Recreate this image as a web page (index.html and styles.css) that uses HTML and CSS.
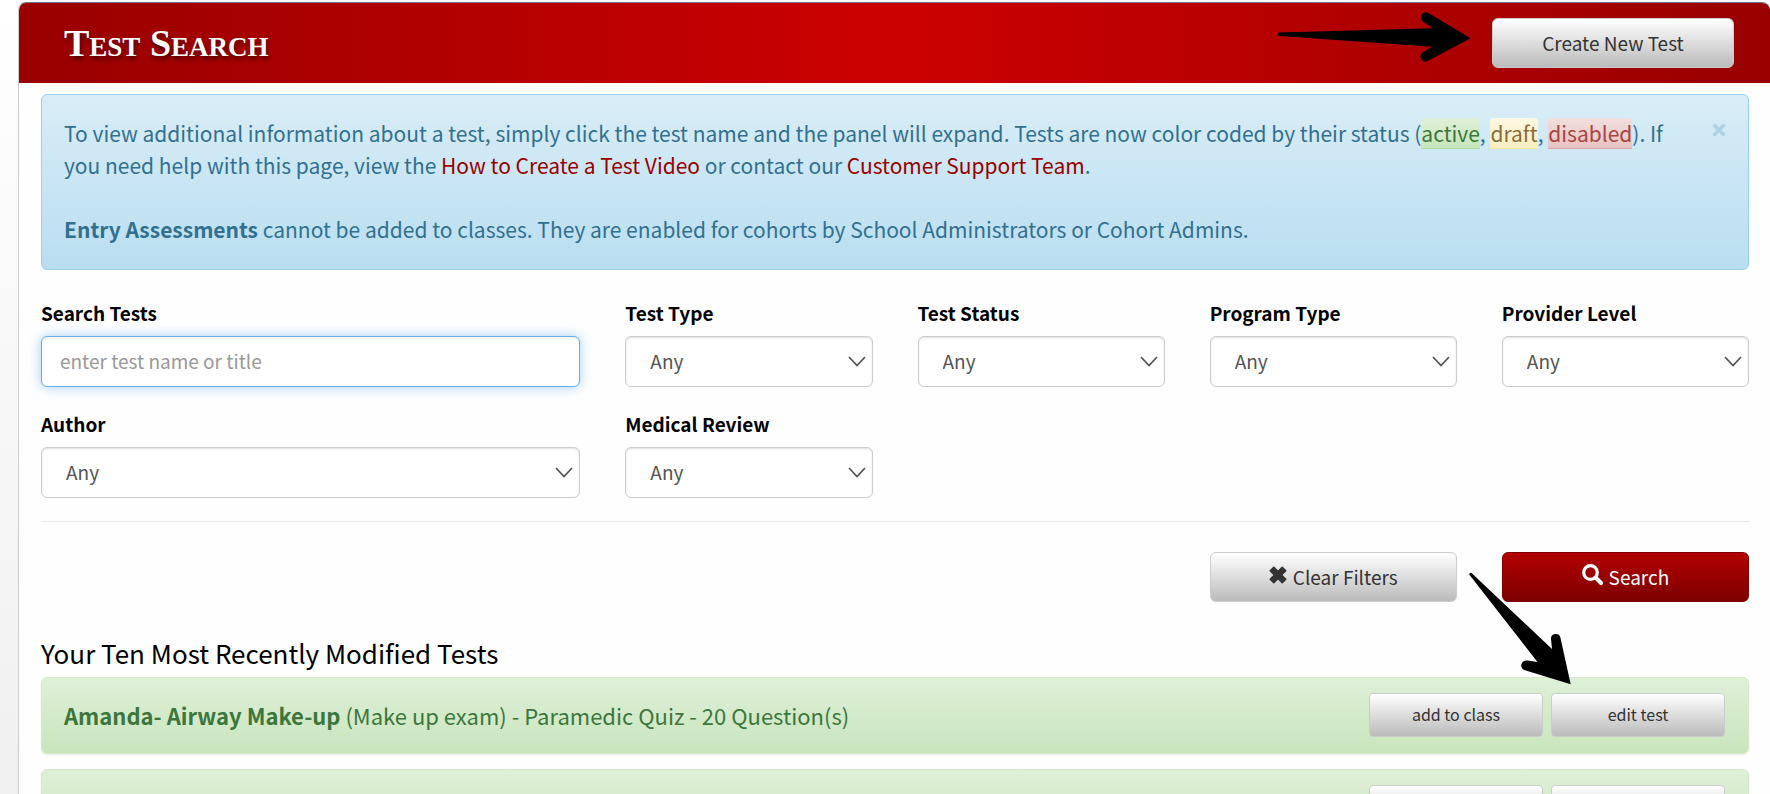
FILE: index.html
```html
<!DOCTYPE html>
<html lang="en">
<head>
<meta charset="utf-8">
<title>Test Search</title>
<link rel="stylesheet" href="styles.css">
</head>
<body>
<div class="page">
  <main class="panel">
    <header class="panel-header">
      <h1 class="panel-title">Test Search</h1>
      <button type="button" class="btn btn-default btn-create">Create New Test</button>
    </header>
    <div class="panel-body">
      <section class="alert">
        <div class="alert-text">
          <p class="alert-line">To view additional information about a test, simply click the test name and the panel will expand. Tests are now color coded by their status (<span class="tag tag-active">active</span>, <span class="tag tag-draft">draft</span>, <span class="tag tag-disabled">disabled</span>). If you need help with this page, view the <a class="link" href="#">How to Create a Test Video</a> or contact our <a class="link" href="#">Customer Support Team</a>.</p>
          <p class="alert-line"><strong>Entry Assessments</strong> cannot be added to classes. They are enabled for cohorts by School Administrators or Cohort Admins.</p>
        </div>
        <button type="button" class="alert-close" aria-label="Close">
          <svg width="14" height="14" viewBox="0 0 14 14"><path d="M1.500 1.500L12.500 12.500M12.500 1.500L1.500 12.500" stroke="currentColor" stroke-width="3.500"/></svg>
        </button>
      </section>

      <form class="filters">
        <div class="field field-wide">
          <label class="label" for="q">Search Tests</label>
          <input class="control control-active" id="q" type="text" placeholder="enter test name or title">
        </div>
        <div class="field">
          <label class="label" for="type">Test Type</label>
          <select class="control select" id="type"><option>Any</option></select>
        </div>
        <div class="field">
          <label class="label" for="status">Test Status</label>
          <select class="control select" id="status"><option>Any</option></select>
        </div>
        <div class="field">
          <label class="label" for="program">Program Type</label>
          <select class="control select" id="program"><option>Any</option></select>
        </div>
        <div class="field">
          <label class="label" for="level">Provider Level</label>
          <select class="control select" id="level"><option>Any</option></select>
        </div>
        <div class="field field-wide">
          <label class="label" for="author">Author</label>
          <select class="control select" id="author"><option>Any</option></select>
        </div>
        <div class="field">
          <label class="label" for="review">Medical Review</label>
          <select class="control select" id="review"><option>Any</option></select>
        </div>
        <hr class="rule">
        <button type="reset" class="btn btn-default btn-clear">
          <svg class="icon" width="18" height="18" viewBox="0 0 18 18"><path d="M4.800 1.300L9 5.500 13.200 1.300 16.700 4.800 12.500 9 16.700 13.200 13.200 16.700 9 12.500 4.800 16.700 1.300 13.200 5.500 9 1.300 4.800z" fill="currentColor" stroke="currentColor" stroke-width="1.600" stroke-linejoin="round"/></svg>
          <span>Clear Filters</span>
        </button>
        <button type="button" class="btn btn-primary">
          <svg class="icon" width="21" height="21" viewBox="0 0 21 21"><circle cx="8.500" cy="8.500" r="6.800" fill="none" stroke="currentColor" stroke-width="3.200"/><path d="M13.500 13.500L19 19" stroke="currentColor" stroke-width="4" stroke-linecap="round"/></svg>
          <span>Search</span>
        </button>
      </form>

      <h2 class="section-title">Your Ten Most Recently Modified Tests</h2>
      <article class="test">
        <p class="test-name"><strong>Amanda- Airway Make-up</strong> (Make up exam) - Paramedic Quiz - 20 Question(s)</p>
        <button type="button" class="btn btn-default btn-small">add to class</button>
        <button type="button" class="btn btn-default btn-small">edit test</button>
      </article>
      <article class="test">
        <p class="test-name"></p>
        <button type="button" class="btn btn-default btn-small" aria-label="add to class"></button>
        <button type="button" class="btn btn-default btn-small" aria-label="edit test"></button>
      </article>
    </div>
  </main>
  <svg class="arrow arrow-create" width="194" height="50" viewBox="0 0 194 50"><path d="M2.500 20.600L155.500 16.200 146 9.600A5 5 0 0 1 151.800 1.200L193.500 26.200 150.500 49A5 5 0 0 1 145.500 40.400L155 34.700 2.500 24A1.700 1.700 0 0 1 2.500 20.600z"/></svg>
  <svg class="arrow arrow-edit" width="103" height="113" viewBox="0 0 103 113"><path d="M2.800 1.200L83 77 82 67A4.800 4.800 0 0 1 91.400 65.500L101.700 112.300 56 98.300A4.800 4.800 0 0 1 58.500 88.600L68.500 90 .8 3.200A1.400 1.400 0 0 1 2.800 1.200z"/></svg>
</div>
</body>
</html>
```

FILE: styles.css
```css
* { box-sizing: border-box; }

body {
  margin: 0;
  font-family: "Noto Sans CJK SC", "Open Sans", sans-serif;
  font-size: 19px;
  color: #000;
}

.page {
  position: relative;
  height: 100vh;
  overflow: hidden;
  padding: 2px 0 0 18px;
  background: linear-gradient(#fff, #f0f0f0);
}

.panel {
  border: 1px solid #ccc;
  border-top-color: #778;
  border-right: 0;
  border-radius: 8px 8px 0 0;
  background: #fefefe;
  overflow: hidden;
}

.panel-header {
  display: flex;
  align-items: center;
  justify-content: space-between;
  height: 80px;
  padding: 0 36px 0 45px;
  background: linear-gradient(to right, #900, #c00 50%, #900);
}

.panel-title {
  margin: 0;
  font: bold 38px "Liberation Serif", serif;
  font-variant: small-caps;
  color: #fff;
  text-shadow: 1px 3px 4px rgba(0, 0, 0, 0.6);
}

.panel-body { padding: 11px 21px 0 22px; }

.alert {
  display: flex;
  align-items: flex-start;
  gap: 24px;
  padding: 22px 22px 24px;
  border: 1px solid #9acfea;
  border-radius: 6px;
  background: linear-gradient(#d9edf7, #b9def0);
  color: #31708f;
}

.alert-text {
  display: flex;
  flex: 1;
  flex-direction: column;
  gap: 32px;
}

.alert-line {
  margin: 0;
  font-size: 21px;
  line-height: 32px;
}

.alert-close {
  display: flex;
  margin-top: 6px;
  padding: 0;
  border: 0;
  background: none;
  color: #aed2e4;
}

.link { color: #900; text-decoration: none; }

.tag {
  border-bottom: 1px solid;
  border-radius: 4px 4px 0 0;
}
.tag-active { color: #3c763d; border-color: #b2dba1; background: linear-gradient(#dff0d8, #c8e5bc); }
.tag-draft { color: #8a6d3b; border-color: #f5e79e; background: linear-gradient(#fcf8e3, #f8efc0); }
.tag-disabled { color: #a94442; border-color: #dca7a7; background: linear-gradient(#f2dede, #e7c3c3); }

.filters {
  display: grid;
  grid-template-columns: repeat(6, minmax(0, 1fr));
  column-gap: 45px;
  row-gap: 23px;
  padding-top: 29px;
}

.field { display: flex; flex-direction: column; gap: 9px; }
.field-wide { grid-column: span 2; }

.label { font-weight: bold; line-height: 28px; }

.control {
  width: 100%;
  height: 51px;
  padding: 0 18px 2px;
  border: 1px solid #ccc;
  border-radius: 6px;
  background-color: #fff;
  box-shadow: inset 0 1px 2px rgba(0, 0, 0, 0.12);
  color: #555;
  font: inherit;
}
.control::placeholder { color: #999; opacity: 1; }
.control-active {
  border-color: #66afe9;
  box-shadow: inset 0 1px 2px rgba(0, 0, 0, 0.08), 0 0 12px rgba(102, 175, 233, 0.6);
}

.select {
  appearance: none;
  padding: 0 30px 2px 24px;
  background-image: url("data:image/svg+xml,%3Csvg xmlns='http://www.w3.org/2000/svg' width='18' height='11'%3E%3Cpath d='M1 1l8 8.500 8-8.500' fill='none' stroke='%23555' stroke-width='1.800'/%3E%3C/svg%3E");
  background-repeat: no-repeat;
  background-position: right 6px center;
}

.rule {
  grid-column: 1 / -1;
  width: 100%;
  margin: 0 0 7px;
  border: 0;
  border-top: 1px solid #e8e8e8;
}

.btn {
  display: flex;
  align-items: center;
  justify-content: center;
  gap: 6px;
  height: 50px;
  padding: 0 6px 2px;
  border: 1px solid #ccc;
  border-radius: 6px;
  font: inherit;
}
.btn-default { background: linear-gradient(#fff, #bbb); color: #333; }
.btn-primary { background: linear-gradient(#b20000, #7d0000); border-color: #800000; color: #fff; }
.btn-create { width: 242px; }
.btn-clear { grid-column: 5; }
.btn-small { width: 174px; height: 44px; border-radius: 4px; font-size: 16px; }

.icon { margin-bottom: 3px; }

.section-title {
  margin: 32px 0 6px;
  font-size: 26px;
  font-weight: normal;
  line-height: 37px;
}

.test {
  display: flex;
  align-items: center;
  gap: 8px;
  height: 77px;
  margin-bottom: 15px;
  padding: 0 23px 2px 22px;
  border: 1px solid #d6e9c6;
  border-radius: 6px;
  background: linear-gradient(#dff0d8, #c8e5bc);
  box-shadow: 0 1px 2px rgba(0, 0, 0, 0.08);
  color: #3c763d;
}
.test-name { flex: 1; margin: 0; font-size: 22px; }

.arrow { position: absolute; overflow: visible; }
.arrow-create { top: 12px; left: 1277px; }
.arrow-edit { top: 572px; left: 1469px; }
```
